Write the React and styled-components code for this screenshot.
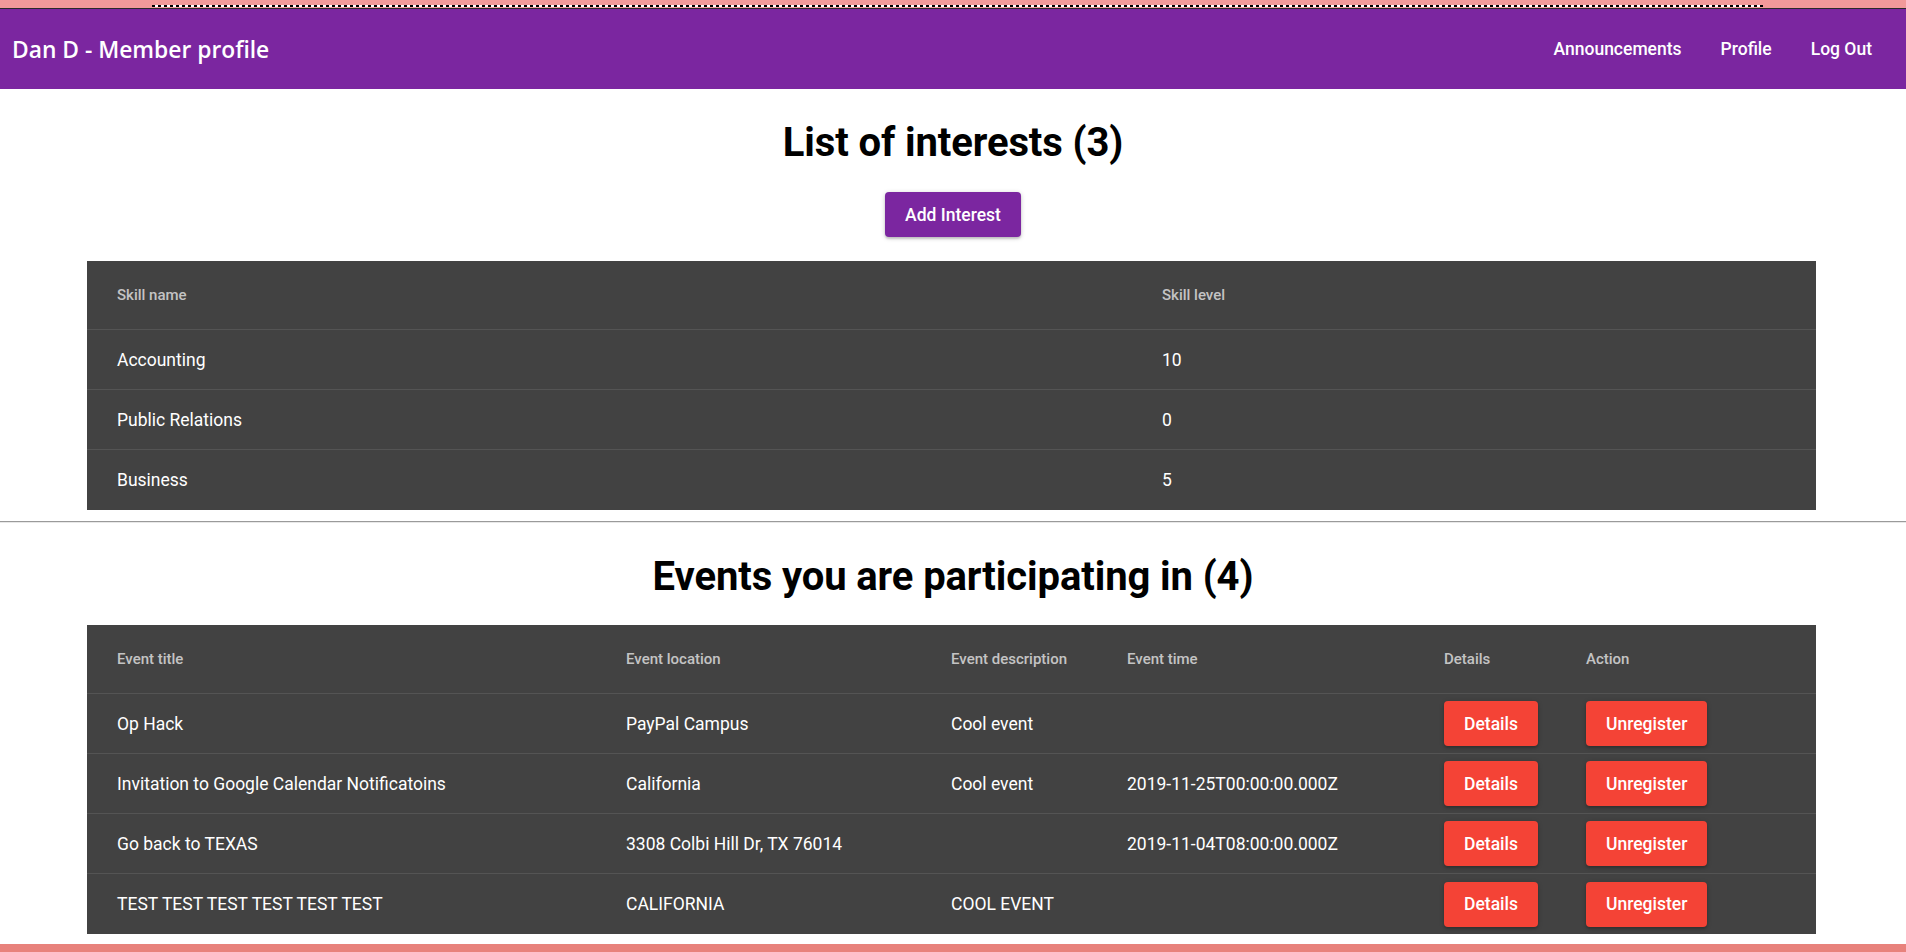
import React from 'react';
import styled, { createGlobalStyle } from 'styled-components';

const GlobalStyle = createGlobalStyle`
  body {
    margin: 0;
    background: #fff;
    font-family: Roboto, "Liberation Sans", sans-serif;
  }
`;

const TopStrip = styled.div`
  height: 8px;
  background: #f29a9a;
  display: flex;
  align-items: flex-end;
  border-bottom: 1px solid #2b2b2b;
`;

const DashRule = styled.div`
  margin-left: 152px;
  width: 1611px;
  height: 2px;
  margin-bottom: 1px;
  background: repeating-linear-gradient(90deg, #000 0 3px, #fff 3px 6px);
`;

const NavBar = styled.header`
  height: 80px;
  background: #7b26a0;
  color: #fff;
  display: flex;
  align-items: center;
  justify-content: space-between;
  padding: 0 34px 0 12px;
`;

const NavTitle = styled.h1`
  margin: 0;
  font-family: "Open Sans", sans-serif;
  font-weight: 600;
  font-size: 22.8px;
`;

const NavLinks = styled.nav`
  display: flex;
  gap: 39px;
`;

const NavLink = styled.a`
  color: #fff;
  font-size: 17.5px;
  font-weight: 500;
  text-decoration: none;
`;

const Section = styled.section`
  display: flex;
  flex-direction: column;
  align-items: center;
`;

const Heading = styled.h2`
  margin: 30px 0 0;
  font-size: 40px;
  line-height: 48px;
  font-weight: 700;
  letter-spacing: -0.1px;
  color: #000;
`;

const Button = styled.button`
  border: none;
  border-radius: 4px;
  height: 45px;
  padding: 0 20px;
  font-family: Roboto, sans-serif;
  font-size: 17.5px;
  font-weight: 500;
  color: #fff;
  background: ${p => (p.$danger ? '#f44336' : '#7b26a0')};
  box-shadow: 0 1px 5px rgba(0, 0, 0, 0.2), 0 2px 2px rgba(0, 0, 0, 0.14);
  cursor: pointer;
`;

const AddButton = styled(Button)`
  margin-top: 25px;
`;

const Table = styled.table`
  margin: 24px 3px 0 0;
  width: 1729px;
  border-collapse: collapse;
  background: #424242;
  table-layout: fixed;
`;

const HeadCell = styled.th`
  height: 68px;
  padding: 0 0 0 30px;
  text-align: left;
  font-size: 15px;
  font-weight: 500;
  color: rgba(255, 255, 255, 0.7);
  border-bottom: 1px solid #545454;
`;

const Cell = styled.td`
  height: 59px;
  padding: 0 0 0 30px;
  font-size: 17.5px;
  color: #fff;
  border-bottom: 1px solid #545454;
`;

const Row = styled.tr`
  &:last-child td {
    border-bottom: none;
    height: 60px;
  }
`;

const Divider = styled.hr`
  margin: 11px 0 0;
  border: none;
  border-top: 1px solid #9a9a9a;
  border-bottom: 1px solid #e8e8e8;
`;

const BottomStrip = styled.div`
  margin-top: 10px;
  height: 40px;
  background: #e8827c;
`;

const interests = [
  { name: 'Accounting', level: 10 },
  { name: 'Public Relations', level: 0 },
  { name: 'Business', level: 5 },
];

const events = [
  { title: 'Op Hack', location: 'PayPal Campus', desc: 'Cool event', time: '' },
  { title: 'Invitation to Google Calendar Notificatoins', location: 'California', desc: 'Cool event', time: '2019-11-25T00:00:00.000Z' },
  { title: 'Go back to TEXAS', location: '3308 Colbi Hill Dr, TX 76014', desc: '', time: '2019-11-04T08:00:00.000Z' },
  { title: 'TEST TEST TEST TEST TEST TEST', location: 'CALIFORNIA', desc: 'COOL EVENT', time: '' },
];

const App = () => (
  <>
    <GlobalStyle />
    <TopStrip>
      <DashRule />
    </TopStrip>
    <NavBar>
      <NavTitle>Dan D - Member profile</NavTitle>
      <NavLinks>
        <NavLink href="#">Announcements</NavLink>
        <NavLink href="#">Profile</NavLink>
        <NavLink href="#">Log Out</NavLink>
      </NavLinks>
    </NavBar>

    <Section>
      <Heading>List of interests ({interests.length})</Heading>
      <AddButton>Add Interest</AddButton>
      <Table>
        <colgroup>
          <col style={{ width: 1045 }} />
          <col />
        </colgroup>
        <thead>
          <tr>
            <HeadCell>Skill name</HeadCell>
            <HeadCell>Skill level</HeadCell>
          </tr>
        </thead>
        <tbody>
          {interests.map(i => (
            <Row key={i.name}>
              <Cell>{i.name}</Cell>
              <Cell>{i.level}</Cell>
            </Row>
          ))}
        </tbody>
      </Table>
    </Section>

    <Divider />

    <Section>
      <Heading>Events you are participating in ({events.length})</Heading>
      <Table>
        <colgroup>
          <col style={{ width: 509 }} />
          <col style={{ width: 325 }} />
          <col style={{ width: 176 }} />
          <col style={{ width: 317 }} />
          <col style={{ width: 142 }} />
          <col />
        </colgroup>
        <thead>
          <tr>
            <HeadCell>Event title</HeadCell>
            <HeadCell>Event location</HeadCell>
            <HeadCell>Event description</HeadCell>
            <HeadCell>Event time</HeadCell>
            <HeadCell>Details</HeadCell>
            <HeadCell>Action</HeadCell>
          </tr>
        </thead>
        <tbody>
          {events.map(e => (
            <Row key={e.title}>
              <Cell>{e.title}</Cell>
              <Cell>{e.location}</Cell>
              <Cell>{e.desc}</Cell>
              <Cell>{e.time}</Cell>
              <Cell><Button $danger>Details</Button></Cell>
              <Cell><Button $danger>Unregister</Button></Cell>
            </Row>
          ))}
        </tbody>
      </Table>
    </Section>

    <BottomStrip />
  </>
);

export default App;
